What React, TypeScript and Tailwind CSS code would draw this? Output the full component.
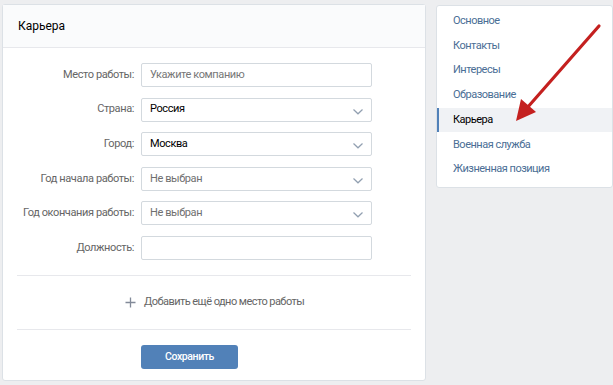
import React from "react";

const font = { fontFamily: "Roboto, 'Noto Sans', Arial, sans-serif" };

function Chevron() {
  return (
    <svg width="12" height="8" viewBox="0 0 12 8" className="absolute right-[7px] top-[9px]">
      <path d="M1.5 1.5 L6 5.8 L10.5 1.5" fill="none" stroke="#92a0b1" strokeWidth="1.2" />
    </svg>
  );
}

type Row = { label: string; value?: string; placeholder?: string; select?: boolean };

const rows: Row[] = [
  { label: "Место работы:", placeholder: "Укажите компанию" },
  { label: "Страна:", value: "Россия", select: true },
  { label: "Город:", value: "Москва", select: true },
  { label: "Год начала работы:", value: "Не выбран", select: true, placeholder: "x" },
  { label: "Год окончания работы:", value: "Не выбран", select: true, placeholder: "x" },
  { label: "Должность:" },
];

const menu = ["Основное", "Контакты", "Интересы", "Образование", "Карьера", "Военная служба", "Жизненная позиция"];

export default function App() {
  return (
    <div className="w-[613px] h-[385px] bg-[#edeef0] relative overflow-hidden flex items-start pl-[2px] pt-[4px] gap-[10px]" style={font}>
      <div className="w-[424px] h-[377px] bg-white border border-[#dce1e6] rounded-[3px] flex flex-col">
        <div className="h-[43px] bg-[#fafbfc] border-b border-[#e7e8ec] px-[15px] flex items-center text-[12px] text-[#000]">
          Карьера
        </div>
        <div className="flex flex-col gap-[10.6px] pt-[15px]">
          {rows.map((r) => (
            <div key={r.label} className="flex items-center h-[24px]">
              <div className="w-[131px] text-right text-[11px] tracking-[-0.4px] whitespace-nowrap text-[#656565]">{r.label}</div>
              <div className="ml-[7px] w-[231px] h-[24px] border border-[#d3d9de] rounded-[2px] relative flex items-center px-[8px] text-[11px] tracking-[-0.4px] whitespace-nowrap">
                {r.value ? (
                  <span className={r.placeholder ? "text-[#6f6f6f]" : "text-[#000]"}>{r.value}</span>
                ) : r.placeholder ? (
                  <span className="text-[#777]">{r.placeholder}</span>
                ) : null}
                {r.select && <Chevron />}
              </div>
            </div>
          ))}
        </div>
        <div className="mx-[14px] mt-[15px] border-t border-[#e7e8ec]" />
        <div className="h-[53px] flex items-center pl-[122px] text-[11px] tracking-[-0.55px] whitespace-nowrap text-[#656565]">
          <svg width="11" height="11" viewBox="0 0 11 11" className="mr-[8px]">
            <path d="M5.5 0.5 V10.5 M0.5 5.5 H10.5" stroke="#828a99" strokeWidth="1.3" />
          </svg>
          Добавить ещё одно место работы
        </div>
        <div className="mx-[14px] border-t border-[#e7e8ec]" />
        <div className="pl-[138px] pt-[15px]">
          <div className="w-[97px] h-[24px] bg-[#5181b8] rounded-[3px] text-white text-[10.5px] tracking-[-0.4px] font-medium flex items-center justify-center">
            Сохранить
          </div>
        </div>
      </div>
      <div className="mt-[1px] w-[177px] bg-white border border-[#dce1e6] rounded-[3px] pt-[3px] pb-[5px]">
        {menu.map((m) => {
          const active = m === "Карьера";
          return (
            <div
              key={m}
              className={
                active
                  ? "h-[24.7px] flex items-center pl-[14px] border-l-2 border-[#5181b8] bg-[#f0f2f5] text-[11px] tracking-[-0.5px] text-[#000]"
                  : "h-[24.7px] flex items-center pl-[16px] text-[11px] tracking-[-0.5px] text-[#4a6e95]"
              }
            >
              {m}
            </div>
          );
        })}
      </div>
      <svg className="absolute left-0 top-0 pointer-events-none" width="613" height="385" viewBox="0 0 613 385">
        <line x1="599" y1="26" x2="527" y2="108" stroke="#c4201f" strokeWidth="3.2" strokeLinecap="round" />
        <polygon points="516,121 521,99 536,112" fill="#c4201f" />
      </svg>
    </div>
  );
}
